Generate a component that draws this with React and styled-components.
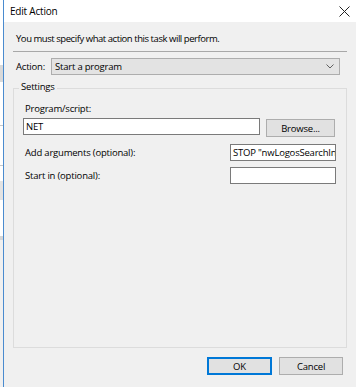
import React from 'react';
import styled, { createGlobalStyle } from 'styled-components';

const Global = createGlobalStyle`
    html, body {
        margin: 0;
        padding: 0;
        background: #ffffff;
    }
    * {
        box-sizing: border-box;
    }
`;

const Screen = styled.div`
    width: 356px;
    height: 387px;
    display: flex;
    overflow: hidden;
    font-family: "Open Sans", "Noto Sans", sans-serif;
    font-size: 9.5px;
    letter-spacing: -0.2px;
    color: #000;
`;

const BehindWindow = styled.div`
    width: 3px;
    flex: none;
    background: linear-gradient(
        to bottom,
        #ffffff 0, #ffffff 65px,
        #d9d9d9 65px, #d9d9d9 82px,
        #ffffff 82px, #ffffff 125px,
        #c8c8c8 125px, #c8c8c8 126px,
        #ffffff 126px, #ffffff 165px,
        #c8c8c8 165px, #c8c8c8 166px,
        #ffffff 166px, #ffffff 181px,
        #e3e3e3 181px, #e3e3e3 200px,
        #ffffff 200px, #ffffff 236px,
        #d6d6d6 236px, #d6d6d6 240px,
        #f0f0f0 240px, #f0f0f0 387px
    );
`;

const Dialog = styled.div`
    flex: 1;
    display: flex;
    flex-direction: column;
    border-left: 1px solid #4a8bcf;
    background: #f0f0f0;
`;

const TitleBar = styled.div`
    height: 22px;
    flex: none;
    background: #ffffff;
    display: flex;
    align-items: center;
    justify-content: space-between;
    padding: 0 6px 0 6px;
    font-size: 10px;
`;

const CloseButton = styled.div`
    width: 12px;
    height: 12px;
    display: flex;
    align-items: center;
    justify-content: center;
`;

const Body = styled.div`
    flex: 1;
    display: flex;
    flex-direction: column;
    padding: 10px 9px 12px 9px;
`;

const Instruction = styled.div`
    line-height: 14px;
    padding-left: 3px;
    letter-spacing: -0.45px;
`;

const Separator = styled.div`
    height: 1px;
    background: #a8a8a8;
    margin-top: 5px;
`;

const ActionRow = styled.div`
    display: flex;
    align-items: center;
    gap: 6px;
    margin-top: 6px;
    padding: 0 7px 0 3px;
`;

const Label = styled.div`
    line-height: 14px;
    white-space: nowrap;
`;

const Combo = styled.div`
    flex: 1;
    height: 17px;
    display: flex;
    align-items: center;
    justify-content: space-between;
    padding: 0 5px 0 3px;
    background: #e3e3e3;
    border: 1px solid #adadad;
`;

const Group = styled.div`
    position: relative;
    flex: 1;
    margin-top: 13px;
    border: 1px solid #dcdcdc;
    padding: 13px 10px 0 9px;
    display: flex;
    flex-direction: column;
`;

const Legend = styled.div`
    position: absolute;
    top: -9px;
    left: 5px;
    padding: 0 2px;
    background: #f0f0f0;
    line-height: 14px;
`;

const FieldLabel = styled(Label)`
    padding-left: 2px;
`;

const ProgramRow = styled.div`
    display: flex;
    gap: 6px;
    margin-top: 2px;
    padding-right: 1px;
`;

const TextBox = styled.div`
    height: 17px;
    width: ${props => props.$width || 'auto'};
    flex: ${props => props.$grow ? 1 : 'none'};
    background: #ffffff;
    border: 1px solid #7a7a7a;
    padding: 0 2px;
    line-height: 15px;
    white-space: nowrap;
    overflow: hidden;
`;

const Button = styled.div`
    width: ${props => props.$width};
    height: 18px;
    flex: none;
    display: flex;
    align-items: center;
    justify-content: center;
    background: #e1e1e1;
    border: 1px solid ${props => props.$default ? '#0078d7' : '#adadad'};
    box-shadow: ${props => props.$default ? 'inset 0 0 0 1px #0078d7' : 'none'};
`;

const BrowseButton = styled(Button)`
    margin-top: 1px;
`;

const OptionRow = styled.div`
    display: flex;
    align-items: center;
    justify-content: space-between;
    margin-top: ${props => props.$top};
`;

const Footer = styled.div`
    display: flex;
    justify-content: flex-end;
    gap: 7px;
    margin-top: 9px;
    padding-right: 4px;
`;

function CloseIcon() {
    return (
        <svg width="11" height="11" viewBox="0 0 11 11">
            <path d="M0.5 0.5 L10.5 10.5 M10.5 0.5 L0.5 10.5" stroke="#222" strokeWidth="1" fill="none" />
        </svg>
    );
}

function Chevron() {
    return (
        <svg width="8" height="5" viewBox="0 0 8 5">
            <path d="M0.5 0.5 L4 4 L7.5 0.5" stroke="#606060" strokeWidth="1" fill="none" />
        </svg>
    );
}

export default function App() {
    return (
        <>
            <Global />
            <Screen>
                <BehindWindow />
                <Dialog>
                    <TitleBar>
                        <span>Edit Action</span>
                        <CloseButton><CloseIcon /></CloseButton>
                    </TitleBar>
                    <Body>
                        <Instruction>You must specify what action this task will perform.</Instruction>
                        <Separator />
                        <ActionRow>
                            <Label>Action:</Label>
                            <Combo>
                                <span>Start a program</span>
                                <Chevron />
                            </Combo>
                        </ActionRow>
                        <Group>
                            <Legend>Settings</Legend>
                            <FieldLabel>Program/script:</FieldLabel>
                            <ProgramRow>
                                <TextBox $grow>NET</TextBox>
                                <BrowseButton $width="69px">Browse...</BrowseButton>
                            </ProgramRow>
                            <OptionRow $top="7px">
                                <FieldLabel>Add arguments (optional):</FieldLabel>
                                <TextBox $width="106px">STOP "nwLogosSearchIndexer"</TextBox>
                            </OptionRow>
                            <OptionRow $top="6px">
                                <FieldLabel>Start in (optional):</FieldLabel>
                                <TextBox $width="106px"></TextBox>
                            </OptionRow>
                        </Group>
                        <Footer>
                            <Button $width="65px" $default>OK</Button>
                            <Button $width="64px">Cancel</Button>
                        </Footer>
                    </Body>
                </Dialog>
            </Screen>
        </>
    );
}
